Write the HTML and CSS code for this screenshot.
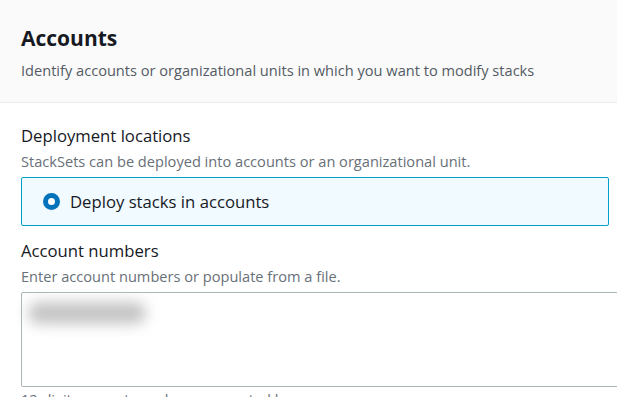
FILE: index.html
```html
<!DOCTYPE html>
<html lang="en">
<head>
  <meta charset="UTF-8"/>
  <title>Accounts</title>
  <link rel="stylesheet" href="styles.css">
</head>
<body>
  <!-- ========== PANEL HEADER ========== -->
  <header class="panel-head">
    <h2 class="panel-title">Accounts</h2>
    <p class="panel-desc">Identify accounts or organizational units in which you want to modify stacks</p>
  </header>

  <section class="panel-body">
    <div class="field">
      <div class="field-label">Deployment locations</div>
      <div class="field-hint">StackSets can be deployed into accounts or an organizational unit.</div>
      <label class="radio-tile">
        <span class="radio-dot"></span>
        <span>Deploy stacks in accounts</span>
      </label>
    </div>

    <div class="field">
      <div class="field-label">Account numbers</div>
      <div class="field-hint">Enter account numbers or populate from a file.</div>
      <div class="text-area">
        <span class="redacted"></span>
      </div>
      <div class="field-hint field-foot">12-digit account numbers, separated by commas</div>
    </div>
  </section>
</body>
</html>
```

FILE: styles.css
```css
*{margin:0;padding:0;box-sizing:border-box}
body{font-family:'Open Sans','Noto Sans',sans-serif;background:#fff;color:#16191f;overflow:hidden}
.panel-head{background:#fafafa;border-bottom:1px solid #eaeded;padding:24px 21px 22px;height:103px}
.panel-title{font-size:21px;line-height:28px;font-weight:700;color:#16191f}
.panel-desc{font-size:14.6px;line-height:20px;color:#545b64;margin-top:8px}
.panel-body{padding:22px 8px 0 21px}
.field{display:flex;flex-direction:column}
.field+.field{margin-top:14px}
.field-label{font-size:16.7px;line-height:22px;color:#16191f}
.field-hint{font-size:14.6px;line-height:20px;color:#687078;margin-top:4px}
.field-foot{margin-top:2px}
.radio-tile{display:flex;align-items:center;gap:10px;height:49px;margin-top:6px;padding:0 21px;background:#f1faff;border:1px solid #00a1c9;border-radius:2px;font-size:16.7px;color:#16191f}
.radio-dot{width:17px;height:17px;border-radius:50%;border:5px solid #0073bb;background:#fff;flex:none}
.text-area{width:620px;height:95px;margin-top:6px;border:1px solid #aab7b8;border-radius:2px;padding:9px 6px}
.redacted{display:block;width:118px;height:22px;background:#c4c4c4;border-radius:11px;filter:blur(7px)}
```
